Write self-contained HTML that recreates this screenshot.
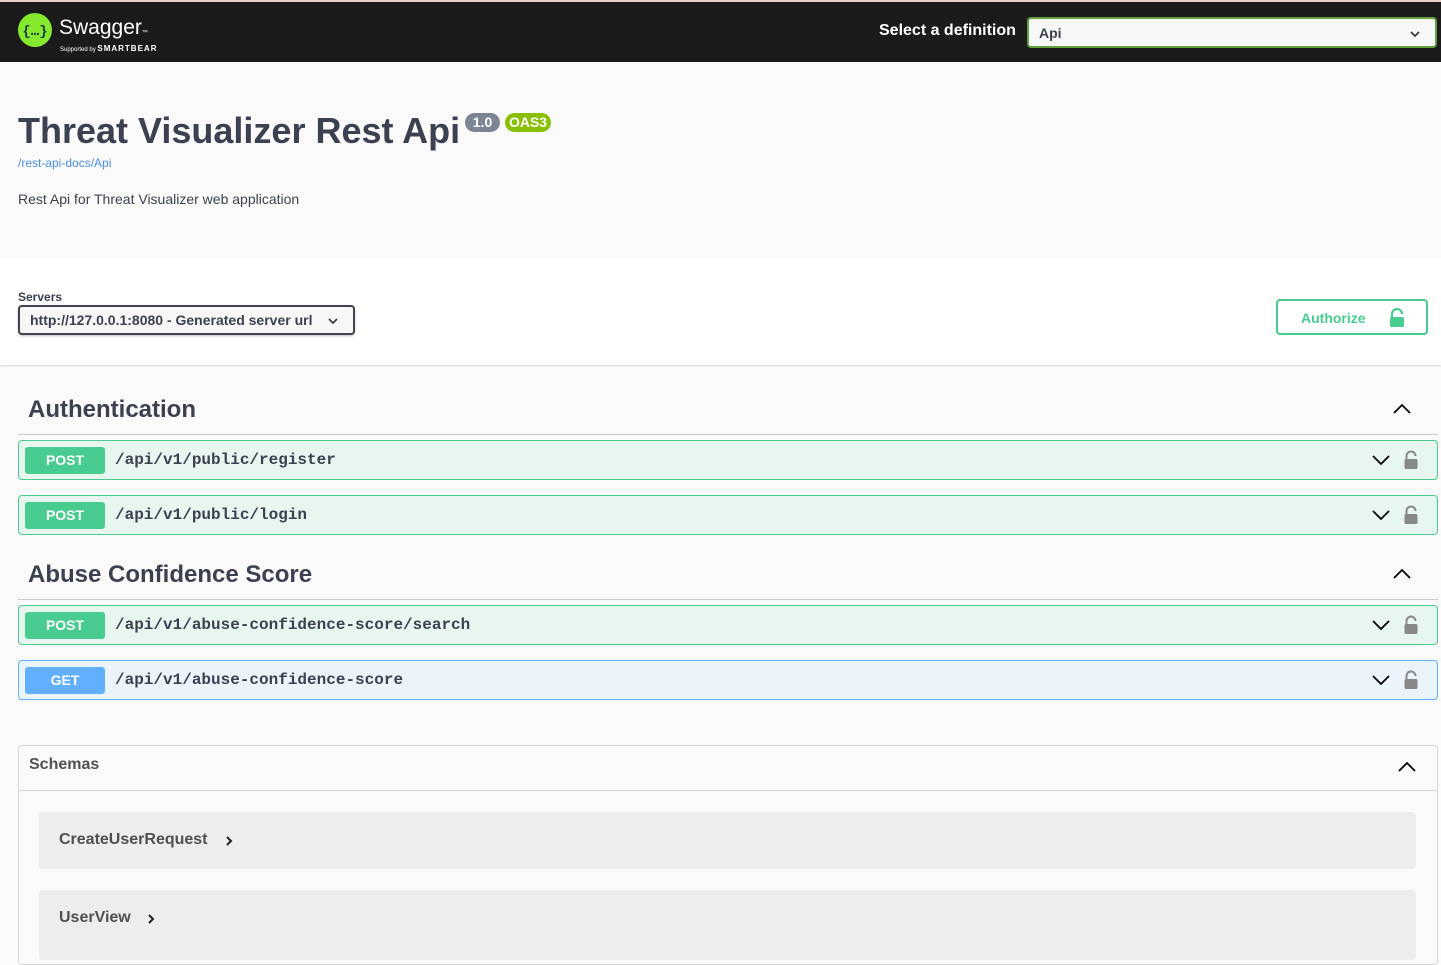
<!DOCTYPE html>
<html><head><meta charset="utf-8"><style>
*{box-sizing:border-box;margin:0;padding:0}
body{width:1441px;height:943px;overflow:hidden;background:#fafafa;font-family:"Liberation Sans",Arial,sans-serif;color:#3b4151;position:relative}
.a{position:absolute}
.top{left:0;top:0;width:1441px;height:62px;background:#1b1b1b;border-top:2px solid #e8cfc8}
.sel{background:#f7f7f7;border:2px solid #62a03f;border-radius:4px}
.op{left:18px;width:1420px;height:40px;border-radius:4px;border:1px solid #49cc90;background:#e8f6f0}
.op.get{border-color:#61affe;background:#ebf3fb}
.m{position:absolute;left:6px;top:6px;width:80px;height:27px;border-radius:3px;background:#49cc90;color:#fff;font-weight:bold;font-size:14px;text-align:center;line-height:27px}
.get .m{background:#61affe}
.p{position:absolute;left:96px;top:10px;font-family:"Liberation Mono",monospace;font-weight:bold;font-size:16px;color:#3b4151}
.ch{position:absolute;left:1352px;top:12px}
.lk{position:absolute;left:1384px;top:9px}
.h2{left:28px;font-size:24px;font-weight:bold}
.ln{left:18px;width:1420px;height:1px;background:#c8c9cc}
.sch{left:39px;width:1377px;background:#ededed;border-radius:4px}
.st{position:absolute;left:20px;font-size:16px;font-weight:bold;color:#505050}
</style></head><body>
<div class="a top">
 <svg class="a" style="left:17px;top:10px" width="36" height="36" viewBox="0 0 36 36"><circle cx="18" cy="18" r="17" fill="#85ea2d"/><text x="18" y="23" font-size="14" font-weight="bold" text-anchor="middle" fill="#173647" font-family="Liberation Mono,monospace">{…}</text></svg>
 <div class="a" style="left:59px;top:14px;color:#fff;font-size:21px">Swagger<span style="font-size:6px">™</span></div>
 <div class="a" style="left:60px;top:42px;color:#fff;font-size:6px">Supported by <b style="font-size:8px;letter-spacing:1px">SMARTBEAR</b></div>
 <div class="a" style="left:879px;top:20px;color:#fff;font-weight:bold;font-size:16px">Select a definition</div>
 <div class="a sel" style="left:1027px;top:15px;width:410px;height:31px"><span class="a" style="left:10px;top:6px;font-weight:bold;font-size:14px">Api</span>
 <svg class="a" style="left:380px;top:10px" width="12" height="10"><path d="M2 3l4 4 4-4" stroke="#333" stroke-width="1.6" fill="none"/></svg></div>
</div>
<div class="a" style="left:18px;top:110px;font-size:36px;font-weight:bold">Threat Visualizer Rest Api</div>
<div class="a" style="left:465px;top:113px;width:35px;height:19px;border-radius:10px;background:#7d8492;color:#fff;font-weight:bold;font-size:14px;text-align:center;line-height:19px">1.0</div>
<div class="a" style="left:505px;top:113px;width:46px;height:19px;border-radius:10px;background:#89bf04;color:#fff;font-weight:bold;font-size:14px;text-align:center;line-height:19px">OAS3</div>
<div class="a" style="left:18px;top:156px;font-size:12px;color:#4990e2">/rest-api-docs/Api</div>
<div class="a" style="left:18px;top:191px;font-size:14px">Rest Api for Threat Visualizer web application</div>
<div class="a" style="left:0;top:257px;width:1441px;height:108px;background:#fff;box-shadow:0 1px 2px rgba(0,0,0,.15)"></div>
<div class="a" style="left:18px;top:290px;font-size:12px;font-weight:bold">Servers</div>
<div class="a" style="left:18px;top:305px;width:337px;height:30px;border:2px solid #41444e;border-radius:4px;background:#f7f7f7;box-shadow:0 1px 2px rgba(0,0,0,.25)"><span class="a" style="left:10px;top:5px;font-size:14px;font-weight:bold">http://127.0.0.1:8080 - Generated server url</span>
<svg class="a" style="left:307px;top:9px" width="12" height="10"><path d="M2 3l4 4 4-4" stroke="#333" stroke-width="1.6" fill="none"/></svg></div>
<div class="a" style="left:1276px;top:299px;width:152px;height:36px;border:2px solid #49cc90;border-radius:4px;background:#fff"><span class="a" style="left:23px;top:9px;color:#49cc90;font-weight:bold;font-size:14px">Authorize</span>
<svg class="a" style="left:110px;top:7px" width="18" height="20" viewBox="0 0 18 20"><path d="M4 9V6a5 5 0 0 1 10 0" stroke="#49cc90" stroke-width="2.2" fill="none"/><rect x="2" y="9" width="14" height="10" rx="1.5" fill="#49cc90"/></svg></div>

<div class="a h2" style="top:396px">Authentication</div>
<svg class="a" style="left:1392px;top:401px" width="20" height="14"><path d="M2 12l8-8 8 8" stroke="#000" stroke-width="1.8" fill="none"/></svg>
<div class="a ln" style="top:434px"></div>
<div class="a op" style="top:440px"><div class="m">POST</div><div class="p">/api/v1/public/register</div>
<svg class="ch" width="20" height="14"><path d="M2 3l8 8 8-8" stroke="#000" stroke-width="1.8" fill="none"/></svg>
<svg class="lk" width="16" height="20" viewBox="0 0 16 20"><path d="M3.5 9V6a4.5 4.5 0 0 1 9 0" stroke="#888" stroke-width="2" fill="none"/><rect x="1.5" y="9" width="13" height="10" rx="1.5" fill="#888"/></svg></div>
<div class="a op" style="top:495px"><div class="m">POST</div><div class="p">/api/v1/public/login</div>
<svg class="ch" width="20" height="14"><path d="M2 3l8 8 8-8" stroke="#000" stroke-width="1.8" fill="none"/></svg>
<svg class="lk" width="16" height="20" viewBox="0 0 16 20"><path d="M3.5 9V6a4.5 4.5 0 0 1 9 0" stroke="#888" stroke-width="2" fill="none"/><rect x="1.5" y="9" width="13" height="10" rx="1.5" fill="#888"/></svg></div>

<div class="a h2" style="top:561px">Abuse Confidence Score</div>
<svg class="a" style="left:1392px;top:566px" width="20" height="14"><path d="M2 12l8-8 8 8" stroke="#000" stroke-width="1.8" fill="none"/></svg>
<div class="a ln" style="top:599px"></div>
<div class="a op" style="top:605px"><div class="m">POST</div><div class="p">/api/v1/abuse-confidence-score/search</div>
<svg class="ch" width="20" height="14"><path d="M2 3l8 8 8-8" stroke="#000" stroke-width="1.8" fill="none"/></svg>
<svg class="lk" width="16" height="20" viewBox="0 0 16 20"><path d="M3.5 9V6a4.5 4.5 0 0 1 9 0" stroke="#888" stroke-width="2" fill="none"/><rect x="1.5" y="9" width="13" height="10" rx="1.5" fill="#888"/></svg></div>
<div class="a op get" style="top:660px"><div class="m">GET</div><div class="p">/api/v1/abuse-confidence-score</div>
<svg class="ch" width="20" height="14"><path d="M2 3l8 8 8-8" stroke="#000" stroke-width="1.8" fill="none"/></svg>
<svg class="lk" width="16" height="20" viewBox="0 0 16 20"><path d="M3.5 9V6a4.5 4.5 0 0 1 9 0" stroke="#888" stroke-width="2" fill="none"/><rect x="1.5" y="9" width="13" height="10" rx="1.5" fill="#888"/></svg></div>

<div class="a" style="left:18px;top:745px;width:1420px;height:220px;border:1px solid #d5d5d5;border-radius:4px;background:#fafafa"></div>
<div class="a" style="left:29px;top:756px;font-size:16px;font-weight:bold;color:#505050">Schemas</div>
<svg class="a" style="left:1397px;top:759px" width="20" height="14"><path d="M2 12l8-8 8 8" stroke="#000" stroke-width="1.8" fill="none"/></svg>
<div class="a" style="left:19px;top:790px;width:1418px;height:1px;background:#d5d5d5"></div>
<div class="a sch" style="top:812px;height:57px"><span class="st" style="top:19px">CreateUserRequest</span>
<svg class="a" style="left:186px;top:23px" width="10" height="12"><path d="M2 2l4 4-4 4" stroke="#222" stroke-width="2" fill="none"/></svg></div>
<div class="a sch" style="top:890px;height:70px"><span class="st" style="top:19px">UserView</span>
<svg class="a" style="left:108px;top:23px" width="10" height="12"><path d="M2 2l4 4-4 4" stroke="#222" stroke-width="2" fill="none"/></svg></div>
</body></html>
